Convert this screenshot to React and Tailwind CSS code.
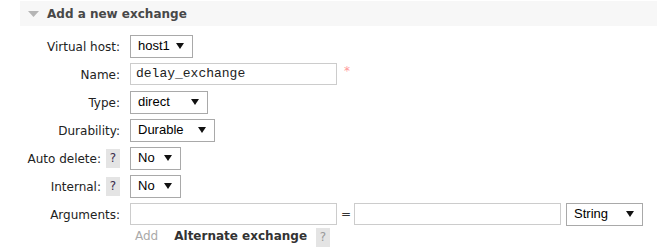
import React from 'react';

const Caret = () => (
  <svg width="8" height="6" viewBox="0 0 8 6" className="shrink-0">
    <path d="M0 0 L8 0 L4 6 Z" fill="#111" />
  </svg>
);

const Select = ({ value, width }) => (
  <div
    className="h-[23px] border border-[#a9a9a9] bg-white flex items-center justify-between pl-[7px] pr-[8px] text-[13px] text-black"
    style={{ width, fontFamily: '"Liberation Sans", Arial, sans-serif' }}
  >
    <span>{value}</span>
    <Caret />
  </div>
);

const TextInput = ({ value = '', width = 207 }) => (
  <div
    className="h-[22px] border border-[#cccccc] bg-white flex items-center px-[5px] text-[13px] text-[#222]"
    style={{ width, fontFamily: '"Liberation Mono", "Courier New", monospace' }}
  >
    {value}
  </div>
);

const Help = ({ muted }) => (
  <span
    className={`inline-flex items-center justify-center w-[14px] h-[19px] bg-[#e4e4e4] text-[12px] ${muted ? 'text-[#999]' : 'text-[#3a2a4a]'}`}
  >
    ?
  </span>
);

const Row = ({ label, help, children }) => (
  <div className="flex items-center h-[28px]">
    <div className="w-[120px] flex items-center justify-end gap-[5px] text-[12px] text-[#222]">
      <span className="pt-[2px]">{label}</span>
      {help && <Help />}
    </div>
    <div className="pl-[10px] flex items-center">{children}</div>
  </div>
);

export default function App() {
  return (
    <div
      className="w-[657px] h-[250px] bg-white overflow-hidden"
      style={{ fontFamily: '"DejaVu Sans", Verdana, sans-serif' }}
    >
      <div className="pl-[20px] pt-[1px]">
        <div className="h-[25px] bg-[#f7f7f7] flex items-center">
          <svg width="11" height="6" viewBox="0 0 11 6" className="ml-[8px] mr-[8px]">
            <path d="M0 0 L11 0 L5.5 6 Z" fill="#b5b5b5" />
          </svg>
          <span className="text-[12px] font-bold text-[#484848]">Add a new exchange</span>
        </div>
      </div>

      <div className="pt-[6px]">
        <Row label="Virtual host:">
          <Select value="host1" width={63} />
        </Row>
        <Row label="Name:">
          <TextInput value="delay_exchange" />
          <span className="ml-[7px] text-[12px] text-[#f99] -mt-[6px]">*</span>
        </Row>
        <Row label="Type:">
          <Select value="direct" width={78} />
        </Row>
        <Row label="Durability:">
          <Select value="Durable" width={85} />
        </Row>
        <Row label="Auto delete:" help>
          <Select value="No" width={51} />
        </Row>
        <Row label="Internal:" help>
          <Select value="No" width={51} />
        </Row>
        <Row label="Arguments:">
          <TextInput />
          <span className="ml-[4px] mr-[3px] text-[12px] text-[#333]">=</span>
          <TextInput />
          <div className="ml-[5px]">
            <Select value="String" width={77} />
          </div>
        </Row>
        <div className="flex items-center h-[16px] pl-[135px]">
          <span className="text-[12px] text-[#aaa]">Add</span>
          <span className="ml-[16px] text-[12px] font-bold text-[#333]">Alternate exchange</span>
          <span className="ml-[9px]">
            <Help muted />
          </span>
        </div>
      </div>
    </div>
  );
}
